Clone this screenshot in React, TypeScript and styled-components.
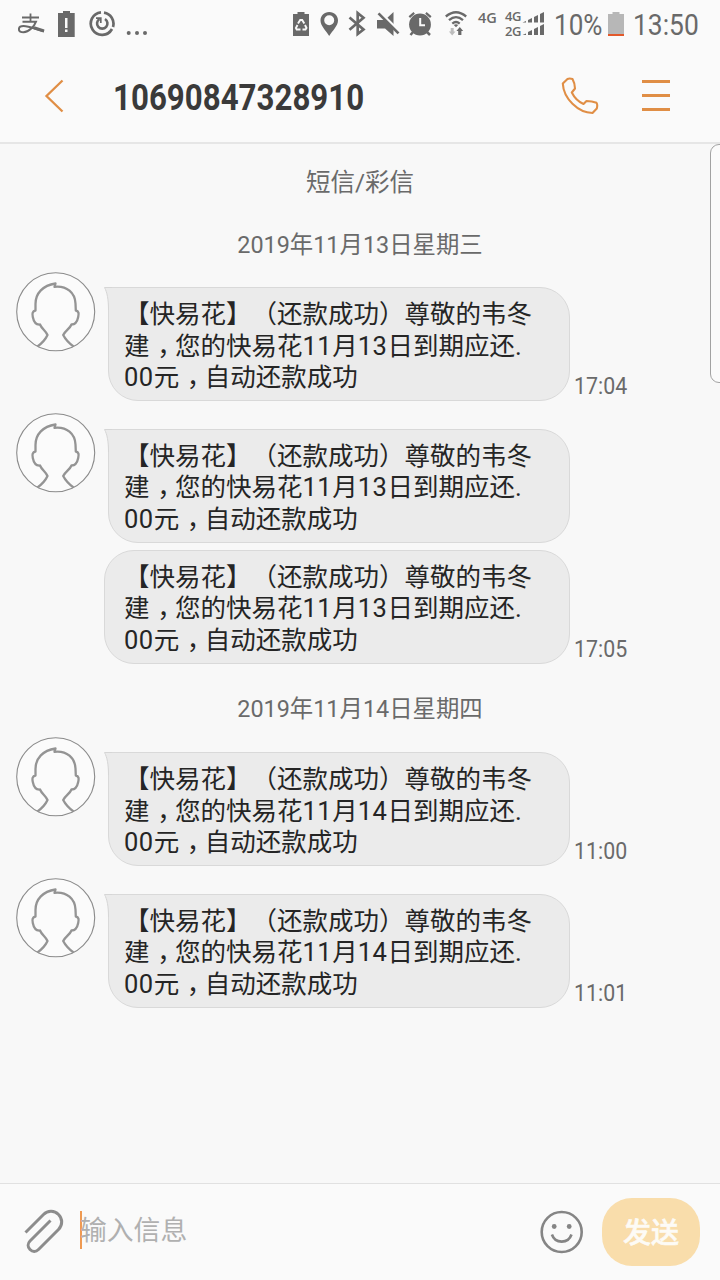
import React from 'react';
import styled, { createGlobalStyle } from 'styled-components';

const GlobalStyle = createGlobalStyle`
  * { box-sizing: border-box; }
  body { margin: 0; background: #f8f8f8; }
`;

const ORANGE = '#e08e45';
const GREY = '#696969';

const Screen = styled.div`
  position: relative;
  display: flex;
  flex-direction: column;
  width: 720px;
  height: 1280px;
  overflow: hidden;
  background: #f8f8f8;
  font-family: Roboto, 'Noto Sans CJK SC', sans-serif;
  text-spacing-trim: space-all;
  white-space: nowrap;
`;

const StatusBar = styled.div`
  display: flex;
  height: 50px;
  background: #fafafa;
  color: ${GREY};
`;

const StatusIcon = styled.svg<{ $gap: number }>`
  flex: none;
  display: block;
  margin-left: ${p => p.$gap}px;
`;

const NarrowBox = styled.span<{ $width: number; $gap?: number }>`
  flex: none;
  display: block;
  width: ${p => p.$width}px;
  margin-left: ${p => p.$gap ?? 0}px;
`;

const NarrowText = styled.span<{ $size: number; $scale: number; $line: number; $weight?: number }>`
  display: inline-block;
  font-size: ${p => p.$size}px;
  font-weight: ${p => p.$weight ?? 400};
  line-height: ${p => p.$line}px;
  transform: scaleX(${p => p.$scale});
  transform-origin: left center;
`;

const NetLabel = styled.span<{ $gap: number }>`
  flex: none;
  width: 20px;
  margin-left: ${p => p.$gap}px;
  padding-top: 10px;
  font: 600 14.5px/16px 'Open Sans', sans-serif;
`;

const NetStack = styled.span`
  display: flex;
  flex-direction: column;
  flex: none;
  width: 17px;
  margin-left: 7px;
  padding-top: 9px;
  font: 600 13px/15px 'Open Sans', sans-serif;
  letter-spacing: -0.4px;
`;

const Header = styled.header`
  display: flex;
  align-items: center;
  height: 94px;
  border-bottom: 2px solid #e6e6e6;
  background: #fafafa;
`;

const HeaderButton = styled.button<{ $left: number }>`
  display: block;
  flex: none;
  margin: 0 0 0 ${p => p.$left}px;
  padding: 0;
  border: 0;
  background: none;
  svg { display: block; }
`;

const Title = styled.h1`
  flex: none;
  width: 252px;
  margin: 4px 0 0 48px;
  color: #3a3a3a;
  font-size: 37px;
  line-height: 44px;
`;

const Thread = styled.main`
  flex: 1;
  display: flex;
  flex-direction: column;
`;

const Caption = styled.div<{ $top: number; $size: number }>`
  margin-top: ${p => p.$top}px;
  height: 30px;
  color: #6a6a6a;
  font-size: ${p => p.$size}px;
  line-height: 30px;
  text-align: center;
`;

const Group = styled.section<{ $top: number }>`
  display: flex;
  align-items: flex-start;
  margin-top: ${p => p.$top}px;
  padding-left: 16px;
`;

const Avatar = styled.svg`
  flex: none;
  display: block;
`;

const Bubbles = styled.div`
  display: flex;
  flex-direction: column;
  gap: 7px;
  padding-top: 15.500px;
`;

const BubbleRow = styled.div<{ $tail: boolean }>`
  display: flex;
  align-items: flex-end;
  padding-left: ${p => (p.$tail ? 12 : 8)}px;
`;

const Bubble = styled.div<{ $tail: boolean }>`
  position: relative;
  width: ${p => (p.$tail ? 462 : 466)}px;
  height: 114px;
  padding: 11px 0 0 ${p => (p.$tail ? 15 : 19)}px;
  border: 1.5px solid #d9d9d9;
  border-radius: ${p => (p.$tail ? '0 30px 30px 30px' : '30px')};
  background: #ebebeb;
  color: #252525;
  font-size: 25.5px;
  line-height: 31.6px;
`;

const Tail = styled.svg`
  position: absolute;
  left: -5px;
  top: -1px;
`;

const Line = styled.div`
  height: 31.6px;
`;

const Digits = styled.span`
  letter-spacing: 0.5px;
`;

const Comma = styled.span`
  display: inline-block;
  width: 1em;
  padding-left: 0.3em;
  font-feature-settings: 'halt';
`;

const Time = styled.span`
  height: 30px;
  margin-left: 4px;
  color: #6a6a6a;
`;

const ScrollHandle = styled.div`
  position: absolute;
  right: -10px;
  top: 144px;
  width: 20px;
  height: 239px;
  border: 1px solid #a3a3a3;
  border-radius: 9px;
  background: #fbfbfb;
`;

const Composer = styled.footer`
  display: flex;
  align-items: center;
  height: 97px;
  border-top: 1px solid #e1e1e1;
  background: #fafafa;
`;

const ComposerIcon = styled.svg<{ $left: number }>`
  flex: none;
  display: block;
  margin-left: ${p => p.$left}px;
`;

const Field = styled.div`
  display: flex;
  align-items: center;
  width: 456px;
  height: 38px;
  margin: -5px 0 0 16px;
  padding-top: 2px;
  border-left: 2px solid #ef9a52;
  color: #b0b0b0;
  font-size: 26.8px;
  line-height: 36px;
  text-indent: -2px;
`;

const Send = styled.button`
  flex: none;
  width: 98px;
  height: 68px;
  margin-left: 18px;
  padding: 3px 0 0;
  border: 0;
  border-radius: 30px;
  background: #f9ddab;
  color: #fdfbf6;
  font: 500 28px/65px Roboto, 'Noto Sans CJK SC', sans-serif;
  -webkit-text-stroke: 0.6px #fdfbf6;
`;

function StatusIcons() {
  return (
    <>
      <StatusIcon $gap={18} width="27" height="50" viewBox="18 0 27 50" fill="none" stroke={GREY}>
        <path d="M22 17.5H39M30.5 13.5V22" strokeWidth="1.8" />
        <path d="M22.5 21.7H36C34.5 26 29 32.2 23.5 32.2C20.5 32.2 18.9 30.8 18.9 29.2C18.9 27.3 20.6 26 23.5 26C29.5 26 36 29.4 44 31.3" strokeWidth="2" />
        <path d="M34 27.8L44 31" strokeWidth="3" />
      </StatusIcon>
      <StatusIcon $gap={13} width="17" height="50" viewBox="58 0 17 50" fill={GREY}>
        <path d="M58 13H63V11H70V13H74.700V37H58Z" />
        <path d="M65 18H67.500V28H65ZM65 29.500H67.500V32H65Z" fill="#fafafa" />
      </StatusIcon>
      <StatusIcon $gap={14} width="27" height="50" viewBox="89 0 27 50" fill="none" stroke={GREY}>
        <path d="M101 12.300A11.300 11.300 0 1 0 112 29M104 12.600A11.300 11.300 0 0 1 113 27" strokeWidth="2.700" />
        <path d="M99.500 19A5.200 5.200 0 1 0 105 19" strokeWidth="2.600" />
        <path d="M96 18.200H100.800V23" strokeWidth="1.700" />
      </StatusIcon>
      <StatusIcon $gap={10} width="22" height="50" viewBox="126 0 22 50" fill={GREY}>
        <circle cx="128.700" cy="33" r="2" /><circle cx="137" cy="33" r="2" /><circle cx="145" cy="33" r="2" />
      </StatusIcon>

      <StatusIcon $gap={145} width="17" height="50" viewBox="293 0 17 50" fill={GREY}>
        <path d="M293 14H297.500V12H304.500V14H309V36H293Z" />
        <g fill="none" stroke="#fafafa" strokeWidth="1.900">
          <path d="M298 23.500L300.200 20H302.200L304.300 23.500" />
          <path d="M305 25L306.500 28L305.500 29.500H302.500" />
          <path d="M300.500 29.500H296.700L295.900 28L297.500 25" />
        </g>
      </StatusIcon>
      <StatusIcon $gap={10} width="19" height="50" viewBox="320 0 19 50" fill={GREY}>
        <path fillRule="evenodd" d="M329.200 12C334.500 12 338 15.800 338 20.500C338 26 332.500 30.500 329.200 36C326 30.500 320.500 26 320.500 20.500C320.500 15.800 324 12 329.200 12ZM329.200 15.300A5 5 0 1 0 329.200 25.300A5 5 0 1 0 329.200 15.300Z" />
      </StatusIcon>
      <StatusIcon $gap={9} width="18" height="50" viewBox="348 0 18 50" fill="none" stroke={GREY} strokeWidth="2.700">
        <path d="M349.500 17.500L363.500 29.500L357.700 34V13L363.500 17.800L349.500 29.800" />
      </StatusIcon>
      <StatusIcon $gap={10} width="24" height="50" viewBox="376 0 24 50" fill={GREY}>
        <path d="M377 20H385L393.500 12V36L385 28.500H377Z" />
        <path d="M380 12L400 32" stroke="#fafafa" strokeWidth="2.500" />
        <path d="M378.500 13.300L398.500 33.300" stroke={GREY} strokeWidth="2.600" />
      </StatusIcon>
      <StatusIcon $gap={8} width="25" height="50" viewBox="408 0 25 50" fill={GREY}>
        <circle cx="420" cy="24.500" r="10.900" />
        <path d="M409.300 17.200L414.200 12.900M430.800 17.200L425.900 12.900" stroke={GREY} strokeWidth="2.200" />
        <path d="M413 32L410.500 35M427 32L430 35" stroke={GREY} strokeWidth="2.500" />
        <path d="M420.200 18V25.300H425" fill="none" stroke="#fafafa" strokeWidth="2" />
      </StatusIcon>
      <StatusIcon $gap={11} width="25" height="50" viewBox="444 0 25 50" fill="none" stroke={GREY} strokeWidth="2.300">
        <path d="M445.800 16.500Q456 8 466.200 16.500M449 20.200Q456 14 463 20.200M452.300 23.600Q456 20.500 459.700 23.600" />
        <path d="M456 27.200L453.800 25Q456 23.700 458.200 25Z" fill={GREY} stroke="none" />
        <path d="M450.700 28H453.700V31.500H455.500L452.200 35.500L448.900 31.500H450.700Z" fill="#bdbdbd" stroke="none" />
        <path d="M458.200 35V31H456.400L459.800 27L463.200 31H461.400V35Z" fill={GREY} stroke="none" />
      </StatusIcon>
      <NetLabel $gap={9}>4G</NetLabel>
      <NetStack><span>4G</span><span>2G</span></NetStack>
      <StatusIcon $gap={0} width="24" height="50" viewBox="522 0 24 50" fill={GREY}>
        <path d="M522.500 22.500L526 21V22.500ZM528 20L532 18V22.500H528ZM534 17L538 15V22.500H534ZM540 14L544 12V22.500H540Z" />
        <path d="M522.500 35L526 33.500V35ZM528 32L532 30V35H528ZM534 29L538 27V35H534ZM540 26L544 24V35H540Z" />
      </StatusIcon>
    </>
  );
}

function Person() {
  return (
    <Avatar width="80" height="80" viewBox="0 0 80 80" fill="none">
      <circle cx="39.700" cy="39.700" r="39" fill="#fbfbfb" stroke="#8b8b8b" strokeWidth="1.100" />
      <path
        d="M21.500 74.500C25.500 71.500 29.500 67.500 31.500 63C30 59 25.500 56.500 24 52.500C19.500 53 17.500 48.500 16.800 45C16 41.500 16.500 39 19.500 38.500V32C19.500 21 27 13.500 39.500 11.500L38.500 14.800C51 13.500 59 21 59.500 31.500L59.800 38.500C62.800 39 63 41.500 62.200 45C61.500 48.500 59.500 52.500 55.500 52.500C54 56.500 49 59 47.200 63C49.500 67.500 53.500 71.500 57.500 74.500"
        stroke="#949494" strokeWidth="2.300" strokeLinejoin="round"
      />
    </Avatar>
  );
}

function Message({ day, time, tail = true }: { day: number; time?: string; tail?: boolean }) {
  return (
    <BubbleRow $tail={tail}>
      <Bubble $tail={tail}>
        {tail && (
          <Tail width="8" height="24" viewBox="0 0 8 24">
            <path d="M0.500 0.500C3 5 4.500 12 4.500 23H7V0.500Z" fill="#ebebeb" />
            <path d="M8 0.500H0.500C3 5 4.500 12 4.500 23" fill="none" stroke="#d6d6d6" />
          </Tail>
        )}
        <Line>【快易花】（还款成功）尊敬的韦冬</Line>
        <Line>建<Comma>，</Comma>您的快易花<Digits>11</Digits>月<Digits>{day}</Digits>日到期应还.</Line>
        <Line><Digits>00</Digits>元<Comma>，</Comma>自动还款成功</Line>
      </Bubble>
      {time && <Time><NarrowText $size={24} $scale={0.89} $line={30}>{time}</NarrowText></Time>}
    </BubbleRow>
  );
}

export default function App() {
  return (
    <Screen>
      <GlobalStyle />
      <StatusBar>
        <StatusIcons />
        <NarrowBox $width={50} $gap={8}><NarrowText $size={30} $scale={0.87} $line={50}>10%</NarrowText></NarrowBox>
        <StatusIcon $gap={4} width="17" height="50" viewBox="608 0 17 50">
          <path d="M608 14H612.500V12H619.500V14H624V36H608Z" fill="#b7b7b7" />
          <path d="M608 34H624V36H608Z" fill="#e2592b" />
        </StatusIcon>
        <NarrowBox $width={70} $gap={8}><NarrowText $size={30} $scale={0.88} $line={50}>13:50</NarrowText></NarrowBox>
      </StatusBar>
      <Header>
        <HeaderButton $left={44} aria-label="返回">
          <svg width="21" height="34" viewBox="0 0 21 34" fill="none" stroke={ORANGE} strokeWidth="2.300"><path d="M18.500 1.500L2.500 17L18.500 32.500" /></svg>
        </HeaderButton>
        <Title><NarrowText $size={37} $scale={0.845} $line={44} $weight={700}>10690847328910</NarrowText></Title>
        <HeaderButton $left={195} aria-label="拨打">
          <svg width="40" height="38" viewBox="560 77 40 38" fill="none" stroke={ORANGE} strokeWidth="2.100" strokeLinejoin="round">
            <path d="M562.800 83.500L567.500 79Q569.500 78 572.500 79Q574.800 83 575 88.500L571.800 92.500C574 97 578 101.500 583.500 104L586.500 101Q592 101 596.500 102.800Q597.800 104.500 596.800 108.500L592.500 113C578 112.500 563.500 98.500 562.800 83.500Z" />
          </svg>
        </HeaderButton>
        <HeaderButton $left={42} aria-label="菜单">
          <svg width="28" height="32" viewBox="0 0 28 32" fill={ORANGE}><path d="M0 0H28V3H0ZM0 14H28V17H0ZM0 28H28V31H0Z" /></svg>
        </HeaderButton>
      </Header>
      <Thread>
        <Caption $top={24} $size={24.5}>短信/彩信</Caption>
        <Caption $top={32} $size={23.4}>2019年11月13日星期三</Caption>
        <Group $top={11.500}><Person /><Bubbles><Message day={13} time="17:04" /></Bubbles></Group>
        <Group $top={12}><Person /><Bubbles><Message day={13} /><Message day={13} time="17:05" tail={false} /></Bubbles></Group>
        <Caption $top={30} $size={23.4}>2019年11月14日星期四</Caption>
        <Group $top={13}><Person /><Bubbles><Message day={14} time="11:00" /></Bubbles></Group>
        <Group $top={12}><Person /><Bubbles><Message day={14} time="11:01" /></Bubbles></Group>
      </Thread>
      <ScrollHandle />
      <Composer>
        <ComposerIcon $left={23} width="41" height="46" viewBox="23 1209 41 46" fill="none" stroke="#8c8c8c" strokeWidth="3">
          <path d="M25.500 1232.500L43.500 1214.500C48 1210 54.500 1210.500 58.500 1214.500C62.500 1218.500 63 1225 58.500 1229.500L38.500 1249.500C35.800 1252.200 32.500 1252 30 1249.500C27.500 1247 27.500 1243.500 30 1241L50.500 1220.500" />
        </ComposerIcon>
        <Field>输入信息</Field>
        <ComposerIcon $left={4} width="44" height="44" viewBox="0 0 44 44" fill="none" stroke="#858585" strokeWidth="2.600">
          <circle cx="21.700" cy="22" r="20" />
          <circle cx="14.200" cy="16.500" r="2.400" fill="#858585" stroke="none" />
          <circle cx="29.200" cy="16.500" r="2.400" fill="#858585" stroke="none" />
          <path d="M11.900 24.500C15.200 34 28.200 34 31.500 24.500" />
        </ComposerIcon>
        <Send>发送</Send>
      </Composer>
    </Screen>
  );
}
